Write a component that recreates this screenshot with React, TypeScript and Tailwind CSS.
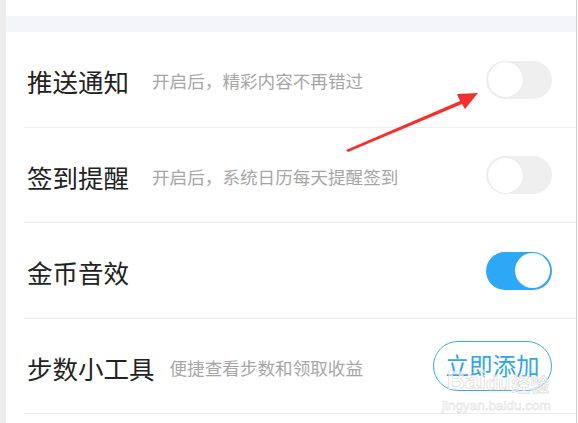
import React from "react";

const cjk = { fontFamily: '"Noto Sans CJK SC", "Noto Sans", sans-serif' };

function Toggle({ on }: { on: boolean }) {
  return on ? (
    <div className="relative w-[66px] h-[38px] rounded-full bg-[#2ea8f6]">
      <div className="absolute right-[2px] top-[1.5px] w-[35px] h-[35px] rounded-full bg-white" />
    </div>
  ) : (
    <div className="relative w-[66px] h-[38px] rounded-full bg-[#efefef]">
      <div className="absolute left-[1.5px] top-[1.5px] w-[35px] h-[35px] rounded-full bg-white shadow-[0_0_1px_rgba(0,0,0,0.12)]" />
    </div>
  );
}

function Row({
  title,
  sub,
  gap,
  h,
  right,
}: {
  title: string;
  sub?: string;
  gap: string;
  h: string;
  right: React.ReactNode;
}) {
  return (
    <div className={`ml-[18px] ${h} border-b border-[#eeeeee] flex items-center pl-[3px] pr-[24px]`}>
      <div className="flex items-center flex-1 pt-[3px]" style={cjk}>
        <span className="text-[25.5px] leading-none text-[#222222]">{title}</span>
        {sub && (
          <span className={`${gap} text-[17.6px] leading-none text-[#a6a6a6]`}>{sub}</span>
        )}
      </div>
      {right}
    </div>
  );
}

export default function App() {
  return (
    <div className="relative w-[578px] h-[423px] overflow-hidden bg-white flex" style={cjk}>
      <div className="w-[6px] bg-[#ededed]" />
      <div className="flex-1 flex flex-col">
        <div className="h-[16px] bg-white" />
        <div className="h-[16px] bg-[#f4f5f9]" />
        <Row title="推送通知" sub="开启后，精彩内容不再错过" gap="ml-[23px]" h="h-[96px]" right={<Toggle on={false} />} />
        <Row title="签到提醒" sub="开启后，系统日历每天提醒签到" gap="ml-[23px]" h="h-[95px]" right={<Toggle on={false} />} />
        <Row title="金币音效" gap="" h="h-[96px]" right={<Toggle on={true} />} />
        <Row
          title="步数小工具"
          sub="便捷查看步数和领取收益"
          gap="ml-[15px]"
          h="h-[95px]"
          right={
            <div className="w-[119px] h-[50px] rounded-full border border-[#3aa9ea] flex items-center justify-center text-[23.5px] leading-none text-[#2fa6e6]">
              立即添加
            </div>
          }
        />
      </div>
      <div className="w-px bg-[#cfcfcf]" />
      <div className="w-px bg-white" />

      {/* red arrow */}
      <svg className="absolute left-0 top-0" width="578" height="423" viewBox="0 0 578 423">
        <polygon
          points="346,150 460,101 457,94 478,93 465,109 462,104 348,152"
          fill="#f5302c"
        />
      </svg>

      {/* watermark */}
      <div
        className="absolute left-[447px] top-[368px] flex items-end text-[25px] leading-none font-bold text-white/60"
        style={{ fontFamily: '"Liberation Sans", "Noto Sans CJK SC", sans-serif', WebkitTextStroke: "0.7px #d9d9d9" }}
      >
        <span>Bai</span>
        <span className="text-[20px]">du</span>
        <span className="text-[19px] ml-[1px]" style={cjk}>经验</span>
      </div>
      <div
        className="absolute left-[442px] top-[399px] text-[13.5px] leading-none text-white/60"
        style={{ fontFamily: '"Liberation Sans", sans-serif', WebkitTextStroke: "0.5px #dcdcdc" }}
      >
        jingyan.baidu.com
      </div>
    </div>
  );
}
